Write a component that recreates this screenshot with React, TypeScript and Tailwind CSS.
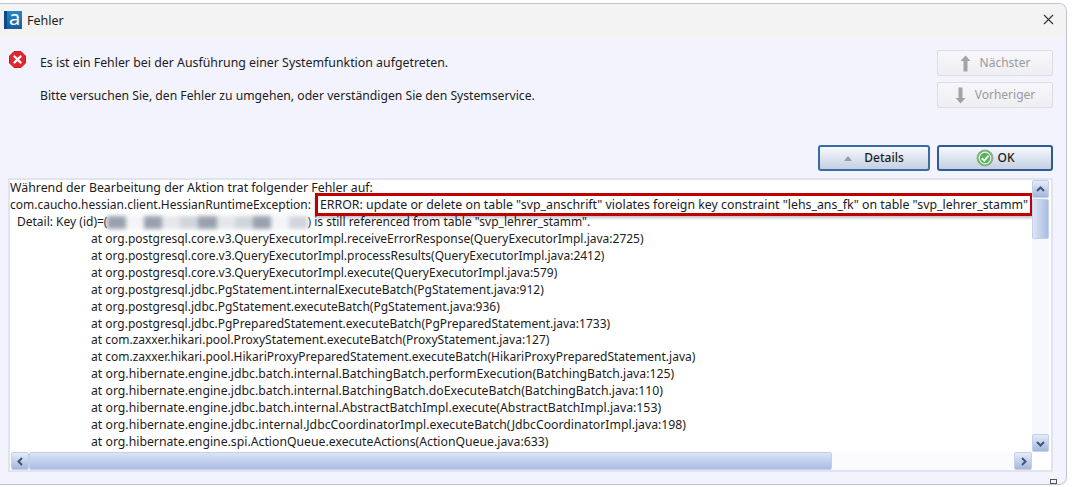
import { X } from "lucide-react";

const traceLines = [
  "at org.postgresql.core.v3.QueryExecutorImpl.receiveErrorResponse(QueryExecutorImpl.java:2725)",
  "at org.postgresql.core.v3.QueryExecutorImpl.processResults(QueryExecutorImpl.java:2412)",
  "at org.postgresql.core.v3.QueryExecutorImpl.execute(QueryExecutorImpl.java:579)",
  "at org.postgresql.jdbc.PgStatement.internalExecuteBatch(PgStatement.java:912)",
  "at org.postgresql.jdbc.PgStatement.executeBatch(PgStatement.java:936)",
  "at org.postgresql.jdbc.PgPreparedStatement.executeBatch(PgPreparedStatement.java:1733)",
  "at com.zaxxer.hikari.pool.ProxyStatement.executeBatch(ProxyStatement.java:127)",
  "at com.zaxxer.hikari.pool.HikariProxyPreparedStatement.executeBatch(HikariProxyPreparedStatement.java)",
];

const hibernateLines = [
  "at org.hibernate.engine.jdbc.batch.internal.BatchingBatch.performExecution(BatchingBatch.java:125)",
  "at org.hibernate.engine.jdbc.batch.internal.BatchingBatch.doExecuteBatch(BatchingBatch.java:110)",
  "at org.hibernate.engine.jdbc.batch.internal.AbstractBatchImpl.execute(AbstractBatchImpl.java:153)",
  "at org.hibernate.engine.jdbc.internal.JdbcCoordinatorImpl.executeBatch(JdbcCoordinatorImpl.java:198)",
  "at org.hibernate.engine.spi.ActionQueue.executeActions(ActionQueue.java:633)",
];

const blurShades = ["bg-gray-400", "bg-gray-100", "bg-gray-400", "bg-gray-200", "bg-gray-300", "bg-gray-400", "bg-gray-200", "bg-gray-300", "bg-gray-400", "bg-gray-100", "bg-gray-300"];

function Chevron({ dir }: { dir: "up" | "down" | "left" | "right" }) {
  const d = { up: "M2 7 L5.5 3.5 L9 7", down: "M2 4 L5.5 7.5 L9 4", left: "M7 2 L3.5 5.5 L7 9", right: "M4 2 L7.5 5.5 L4 9" }[dir];
  return (
    <svg width="11" height="11" viewBox="0 0 11 11" fill="none" stroke="#3f5578" strokeWidth="2">
      <path d={d} />
    </svg>
  );
}

function ScrollButton({ dir, className }: { dir: "up" | "down" | "left" | "right"; className: string }) {
  return (
    <div className={`flex shrink-0 items-center justify-center rounded-[2px] border border-[#c3d0e8] bg-gradient-to-b from-[#e6edf9] to-[#a3b6dc] ${className}`}>
      <Chevron dir={dir} />
    </div>
  );
}

function ErrorIcon() {
  return (
    <svg width="17" height="17" viewBox="0 0 17 17" className="shrink-0">
      <path d="M5 0.5 H12 L16.5 5 V12 L12 16.5 H5 L0.5 12 V5 Z" fill="#e0272f" stroke="#c81e26" strokeLinejoin="round" />
      <path d="M5.5 5.5 L11.5 11.5 M11.5 5.5 L5.5 11.5" stroke="#fff" strokeWidth="2.4" strokeLinecap="round" />
    </svg>
  );
}

function OkIcon() {
  return (
    <svg width="18" height="18" viewBox="0 0 18 18">
      <circle cx="9" cy="9" r="8" fill="#62b964" stroke="#9aa8a0" />
      <circle cx="9" cy="9" r="5.8" fill="#58b45c" stroke="#e6f4e6" strokeWidth="1.2" />
      <path d="M5.8 9.2 L8.2 11.6 L12.4 6.8" fill="none" stroke="#fff" strokeWidth="2" />
    </svg>
  );
}

function ArrowIcon({ down }: { down?: boolean }) {
  return (
    <svg width="11" height="17" viewBox="0 0 11 17" className={down ? "rotate-180" : ""}>
      <path d="M5.5 0.5 L10.5 6 H7.5 V16.5 H3.5 V6 H0.5 Z" fill="#a3a3a3" />
    </svg>
  );
}

export default function App() {
  return (
    <div className="h-[487px] w-[1072px] overflow-hidden bg-white pt-[3px] text-[12px] text-[#1c1c1c] [font-family:'Noto_Sans',sans-serif]">
      <div className="relative flex h-[482px] w-[1067px] flex-col overflow-hidden rounded-r-lg border-t border-r border-b border-[#c2c2cc] bg-[#f2f3fd]">
        {/* Title bar */}
        <div className="flex h-[34px] shrink-0 items-center bg-[#f3f3f3] pl-[4px] pr-[9px]">
          <div className="mb-[2px] flex h-[18px] w-[18px] items-center justify-center border-l-[3px] border-[#0f4a85] bg-gradient-to-b from-[#2388c4] to-[#1a5c9c] pb-[4px] text-[20px] leading-none text-white">a</div>
          <span className="ml-[5px] text-[12.5px]">Fehler</span>
          <X className="mb-[3px] ml-auto h-[17px] w-[17px] text-[#333]" strokeWidth={1.5} />
        </div>

        {/* Message and action buttons */}
        <div className="flex h-[140px] shrink-0 pl-[9px] pr-[13px]">
          <div className="pt-[13px]">
            <ErrorIcon />
          </div>
          <div className="ml-[14px] flex flex-col gap-[17px] pt-[17px]">
            <p className="text-[12.35px] leading-[16px]">Es ist ein Fehler bei der Ausführung einer Systemfunktion aufgetreten.</p>
            <p className="text-[12.18px] leading-[16px]">Bitte versuchen Sie, den Fehler zu umgehen, oder verständigen Sie den Systemservice.</p>
          </div>
          <div className="ml-auto flex flex-col items-end pt-[12px]">
            <button className="flex h-[26px] w-[116px] items-center justify-center gap-[9px] rounded-[2px] border border-[#dcdde6] bg-gradient-to-b from-[#f7f7fb] to-[#eeeef3] text-[#9a9a9a]">
              <ArrowIcon />
              Nächster
            </button>
            <button className="mt-[6px] flex h-[26px] w-[116px] items-center justify-center gap-[9px] rounded-[2px] border border-[#dcdde6] bg-gradient-to-b from-[#f7f7fb] to-[#eeeef3] text-[#9a9a9a]">
              <ArrowIcon down />
              Vorheriger
            </button>
            <div className="mt-[37px] flex gap-[7px]">
              <button className="flex h-[26px] w-[112px] items-center justify-center gap-[12px] rounded-[3px] border-2 border-[#3a6ba5] bg-gradient-to-b from-[#f7f9fd] to-[#c4cfe2] font-medium">
                <span className="h-0 w-0 border-x-[4px] border-b-[5px] border-x-transparent border-b-[#9c9c9c]" />
                Details
              </button>
              <button className="flex h-[26px] w-[116px] items-center justify-center gap-[4px] rounded-[3px] border-2 border-[#2f5c92] bg-gradient-to-b from-[#f7f9fd] to-[#c4cfe2] font-medium">
                <OkIcon />
                OK
              </button>
            </div>
          </div>
        </div>

        {/* Log panel */}
        <div className="ml-[8px] flex h-[294px] w-[1045px] shrink-0 flex-col border-2 border-[#e1e3ee] bg-white">
          <div className="flex min-h-0 flex-1">
            <div className="min-w-0 flex-1 overflow-hidden whitespace-nowrap leading-[16.93px]">
              <div className="text-[12.35px]">Während der Bearbeitung der Aktion trat folgender Fehler auf:</div>
              <div>
                com.caucho.hessian.client.HessianRuntimeException:
                <span className="relative ml-[7px] px-[2px] text-[12.35px] outline-3 outline-[#c00000] shadow-[0_2px_3px_3px_rgba(0,0,0,0.25)]">
                  ERROR: update or delete on table "svp_anschrift" violates foreign key constraint "lehs_ans_fk" on table "svp_lehrer_stamm"
                </span>
              </div>
              <div className="flex items-center pl-[7px]">
                Detail: Key (id)=(
                <span className="flex h-[13px] w-[200px] blur-[2px]">
                  {blurShades.map((shade, i) => (
                    <span key={i} className={`flex-1 ${shade}`} />
                  ))}
                </span>
                ) is still referenced from table "svp_lehrer_stamm".
              </div>
              {traceLines.map((line) => (
                <div key={line} className="pl-[81px]">{line}</div>
              ))}
              {hibernateLines.map((line) => (
                <div key={line} className="pl-[81px] text-[12.25px]">{line}</div>
              ))}
            </div>
            <div className="flex w-[17px] shrink-0 flex-col bg-[#f7f8fe]">
              <ScrollButton dir="up" className="h-[18px] w-[17px]" />
              <div className="mt-[1px] h-[40px] w-[17px] rounded-[2px] border border-[#c3d0e8] bg-gradient-to-r from-[#dfe7f6] to-[#a9bce4]" />
              <ScrollButton dir="down" className="mt-auto h-[18px] w-[17px]" />
            </div>
            <div className="w-[2px] shrink-0" />
          </div>
          <div className="flex h-[18px] shrink-0 pl-[1px] pr-[19px]">
            <ScrollButton dir="left" className="h-[18px] w-[18px]" />
            <div className="h-[18px] w-[803px] rounded-[2px] border border-[#c3d0e8] bg-gradient-to-b from-[#dbe4f7] to-[#a9bce4]" />
            <div className="flex-1 bg-[#fbfbfe]" />
            <ScrollButton dir="right" className="h-[18px] w-[18px]" />
          </div>
        </div>
        {/* Resize grip */}
        <div className="absolute bottom-0 right-[9px] h-[5px] w-[7px] border border-[#555]" />
      </div>
    </div>
  );
}
